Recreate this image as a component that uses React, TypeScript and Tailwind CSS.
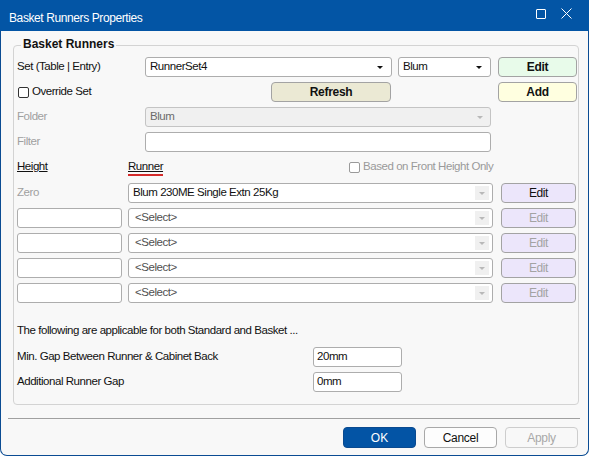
import React from "react";

const txt = "text-[11.5px] tracking-[-0.45px] leading-none";

function Arrow({ grey }: { grey?: boolean }) {
  return (
    <span
      className={
        "w-0 h-0 border-x-[3px] border-t-[3px] border-x-transparent " +
        (grey ? "border-t-[#b8b8b8]" : "border-t-[#111]")
      }
    />
  );
}

function Combo({ value, w, boxed, disabled, pl }: { value?: string; w: string; boxed?: boolean; disabled?: boolean; pl?: string }) {
  return (
    <div
      className={
        "h-[20px] flex items-center rounded-[3px] border " +
        w +
        (disabled ? " bg-[#f0f0f0] border-[#c4c4c4]" : " bg-white border-[#adadad]")
      }
    >
      <span
        className={
          "flex-1 " + (pl ?? "pl-[4px]") + " " + txt + (disabled ? " text-[#6b6b6b]" : value?.startsWith("<") ? " text-[#505050]" : " text-[#111]")
        }
      >
        {value}
      </span>
      {boxed ? (
        <span className="w-[14px] h-[14px] mr-[3px] bg-[#f0f0f0] flex items-center justify-center">
          <Arrow grey />
        </span>
      ) : (
        <span className="mr-[8px] flex items-center">
          <Arrow />
        </span>
      )}
    </div>
  );
}

function Box({ w, value }: { w: string; value?: string }) {
  return (
    <div className={"h-[20px] flex items-center rounded-[3px] border border-[#adadad] bg-white " + w}>
      <span className={"pl-[3px] text-[#111] " + txt}>{value}</span>
    </div>
  );
}

function Btn({ label, w, bg, bold, dim }: { label: string; w: string; bg: string; bold?: boolean; dim?: boolean }) {
  return (
    <div
      className={
        "h-[20px] flex items-center justify-center rounded-[4px] border border-[#a3a3a3] " +
        w +
        " " +
        bg
      }
    >
      <span
        className={
          "text-[12px] leading-none " +
          (bold ? "font-bold tracking-[-0.3px] " : "tracking-[-0.4px] ") +
          (dim ? "text-[#a3a3a3]" : "text-[#111]")
        }
      >
        {label}
      </span>
    </div>
  );
}

function Check({ label, dim }: { label: string; dim?: boolean }) {
  return (
    <div className="flex items-center">
      <span
        className={
          "w-[11px] h-[11px] rounded-[2px] border bg-white " + (dim ? "border-[#9a9a9a]" : "border-[#333]")
        }
      />
      <span className={"ml-[3px] " + txt + (dim ? " text-[#9a9a9a]" : " text-[#111]")}>{label}</span>
    </div>
  );
}

export default function App() {
  const rows = [0, 1, 2, 3];
  return (
    <div className="w-[589px] h-[456px] flex flex-col font-['Liberation_Sans',Arial,sans-serif] bg-white">
      <div className="h-[31px] shrink-0 bg-[#0355a5] flex items-start">
        <span className="mt-[12px] ml-[9px] text-[12px] leading-none tracking-[-0.4px] text-white">
          Basket Runners Properties
        </span>
        <div className="ml-auto mt-[8px] mr-[17px] flex items-center gap-[15px]">
          <span className="w-[10px] h-[10px] border border-white rounded-[1px]" />
          <svg width="11" height="11" viewBox="0 0 11 11">
            <path d="M0.5 0.5 L10.5 10.5 M10.5 0.5 L0.5 10.5" stroke="white" strokeWidth="1" />
          </svg>
        </div>
      </div>

      <div className="flex-1 flex flex-col bg-[#f8f8f8] border-x border-b border-[#0b4c93] rounded-b-[7px]">
        <div className="relative ml-[12px] mt-[14px] w-[566px] h-[360px] border border-[#d3d3d3] rounded-[4px] pl-[3px] pt-[11px] flex flex-col">
          <span className="absolute -top-[8px] left-[7px] px-[2px] bg-[#f8f8f8] text-[12px] leading-none font-bold text-[#111]">
            Basket Runners
          </span>

          <div className="h-[20px] flex items-center">
            <span className={"w-[128px] text-[#111] " + txt}>Set (Table | Entry)</span>
            <Combo w="w-[247px]" value="RunnerSet4" />
            <div className="ml-[6px]">
              <Combo w="w-[93px]" value="Blum" />
            </div>
            <div className="ml-[7px]">
              <Btn label="Edit" w="w-[79px]" bg="bg-[#e8fbea]" bold />
            </div>
          </div>

          <div className="mt-[5px] h-[20px] flex items-center">
            <div className="w-[254px] pl-[1px]">
              <Check label="Override Set" />
            </div>
            <Btn label="Refresh" w="w-[120px]" bg="bg-[#ebe9d4]" bold />
            <div className="ml-[107px]">
              <Btn label="Add" w="w-[79px]" bg="bg-[#ffffe0]" bold />
            </div>
          </div>

          <div className="mt-[5px] h-[20px] flex items-center">
            <span className={"w-[128px] text-[#a0a0a0] " + txt}>Folder</span>
            <Combo w="w-[346px]" value="Blum" boxed disabled />
          </div>

          <div className="mt-[5px] h-[20px] flex items-center">
            <span className={"w-[128px] text-[#a0a0a0] " + txt}>Filter</span>
            <Box w="w-[346px]" />
          </div>

          <div className="mt-[5px] h-[20px] flex items-center">
            <span className={"w-[111px] text-[#111] underline " + txt}>Height</span>
            <span className={"relative text-[#111] underline " + txt}>
              Runner
              <span className="absolute left-0 right-0 top-[13px] h-[2px] bg-[#d42a2a]" />
            </span>
            <div className="ml-[186px]">
              <Check label="Based on Front Height Only" dim />
            </div>
          </div>

          <div className="mt-[6px] h-[20px] flex items-center">
            <span className={"w-[111px] text-[#a0a0a0] " + txt}>Zero</span>
            <Combo w="w-[365px]" value="Blum 230ME Single Extn 25Kg" boxed pl="pl-[4px]" />
            <div className="ml-[8px]">
              <Btn label="Edit" w="w-[75px]" bg="bg-[#ece6fb]" />
            </div>
          </div>

          {rows.map((r) => (
            <div key={r} className="mt-[5px] h-[20px] flex items-center">
              <Box w="w-[105px]" />
              <div className="ml-[6px]">
                <Combo w="w-[365px]" value="<Select>" boxed pl="pl-[6px]" />
              </div>
              <div className="ml-[8px]">
                <Btn label="Edit" w="w-[75px]" bg="bg-[#ece6fb]" dim />
              </div>
            </div>
          ))}

          <div className="mt-[18px] h-[20px] flex items-center">
            <span className={"text-[#111] " + txt}>The following are applicable for both Standard and Basket ...</span>
          </div>

          <div className="mt-[6px] h-[20px] flex items-center">
            <span className={"w-[296px] text-[#111] " + txt}>Min. Gap Between Runner &amp; Cabinet Back</span>
            <Box w="w-[89px]" value="20mm" />
          </div>

          <div className="mt-[5px] h-[20px] flex items-center">
            <span className={"w-[296px] text-[#111] " + txt}>Additional Runner Gap</span>
            <Box w="w-[89px]" value="0mm" />
          </div>
        </div>

        <div className="ml-[7px] mt-[13px] w-[572px] h-px bg-[#a0a0a0]" />

        <div className="mt-[8px] pr-[10px] flex justify-end gap-[8px]">
          <div className="w-[73px] h-[21px] rounded-[4px] bg-[#0354a5] border border-[#0a4a90] flex items-center justify-center">
            <span className="text-[12px] leading-none text-white">OK</span>
          </div>
          <div className="w-[73px] h-[21px] rounded-[4px] bg-[#fdfdfd] border border-[#a8a8a8] flex items-center justify-center">
            <span className="text-[12px] leading-none tracking-[-0.3px] text-[#111]">Cancel</span>
          </div>
          <div className="w-[73px] h-[21px] rounded-[4px] bg-[#f8f8f8] border border-[#cdcdcd] flex items-center justify-center">
            <span className="text-[12px] leading-none tracking-[-0.3px] text-[#a8a8a8]">Apply</span>
          </div>
        </div>
      </div>
    </div>
  );
}
